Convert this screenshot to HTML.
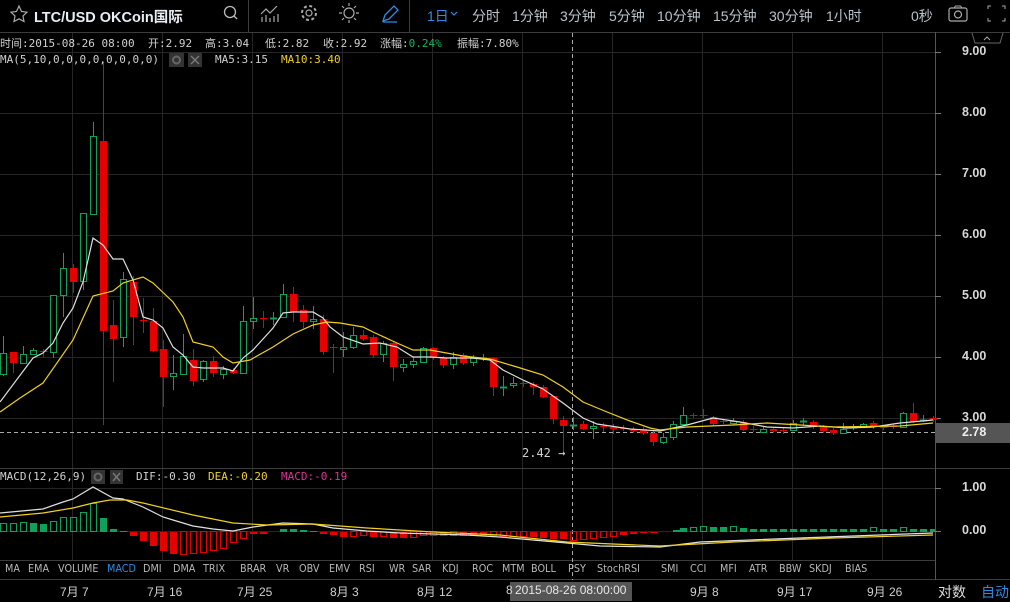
<!DOCTYPE html>
<html><head><meta charset="utf-8"><style>
body{margin:0;background:#000;width:1010px;height:601px;overflow:hidden;position:relative;font-family:"Liberation Sans","Noto Sans CJK SC",sans-serif;color:#c8c8c8}
.a{position:absolute;white-space:nowrap}
.tb{font-size:14px;color:#b8c4cc;top:6px}
.m{font-family:"DejaVu Sans Mono","Liberation Mono","Noto Sans CJK SC",monospace;font-size:11px;color:#d0d0d0}
.ind{font-size:10.5px;color:#b8b8b8;top:563px;font-family:"DejaVu Sans","Liberation Sans",sans-serif;transform:scaleX(0.92);transform-origin:left}
.dt{font-size:12px;color:#d0d0d0;top:583px}
.ax{font-size:12.5px;font-weight:bold;color:#d8d8d8;left:962px}
</style></head><body>
<svg class="a" style="left:0;top:0" width="1010" height="601">
<g stroke="#262626" stroke-width="1">
<path d="M72.5 33V560M162.5 33V560M252.5 33V560M342.5 33V560M432.5 33V560M522.5 33V560M612.5 33V560M702.5 33V560M792.5 33V560M882.5 33V560"/>
<path d="M0 52.5H935M0 113.5H935M0 174.5H935M0 235.5H935M0 296.5H935M0 357.5H935M0 418.5H935M0 488.5H935M0 531.5H935"/>
</g>
<g stroke="#3c3c3c"><path d="M0 32.5H1010M0 468.5H1010M0 560.5H935M0 579.5H1010M248.5 0V32M409.5 0V32"/></g>
<path d="M935.5 32V580" stroke="#555"/>
<path d="M935 52.5h6M935 113.5h6M935 174.5h6M935 235.5h6M935 296.5h6M935 357.5h6M935 418.5h6M935 488.5h6M935 531.5h6" stroke="#777"/>
<path d="M972 33l3 10h25l3-10" stroke="#666" fill="none"/><path d="M984 40l3-3 3 3" stroke="#aaa" fill="none"/>
<rect x="935" y="423" width="75" height="20" fill="#555"/>
<path d="M572.5 33V580" stroke="#aaa" stroke-dasharray="4,3"/>
<path d="M0 432.5H935" stroke="#aaa" stroke-dasharray="4,3"/>
<g stroke="#0fa05a" fill="#000">
<path d="M3.5 336V376M23.5 346V364M33.5 348V355M53.5 295V358M63.5 253V317M83.5 213V290M93.5 122V214M123.5 272V347M173.5 355V390M183.5 334V375M203.5 360V382M223.5 366V379M243.5 306V374M253.5 297V329M273.5 312V325M283.5 284V318M313.5 306V329M343.5 332V357M353.5 327V349M383.5 341V362M403.5 359V372M413.5 357V368M423.5 347V362M453.5 352V369M473.5 355V366M483.5 354V361M503.5 376V396M513.5 377V388M573.5 417V430M593.5 421V439M663.5 433V444M673.5 421V440M683.5 407V426M733.5 418V425M763.5 426V433M793.5 420V431M803.5 418V425M843.5 423V434M853.5 424V430M863.5 423V428M903.5 412V428M923.5 415V422"/>
<rect x="0.5" y="353.5" width="6" height="21"/><rect x="20.5" y="354.5" width="6" height="9"/><rect x="30.5" y="350.5" width="6" height="4"/><rect x="50.5" y="295.5" width="6" height="57"/><rect x="60.5" y="268.5" width="6" height="27"/><rect x="80.5" y="213.5" width="6" height="68"/><rect x="90.5" y="136.5" width="6" height="78"/><rect x="120.5" y="279.5" width="6" height="58"/><rect x="170.5" y="373.5" width="6" height="3"/><rect x="180.5" y="356.5" width="6" height="18"/><rect x="200.5" y="361.5" width="6" height="18"/><rect x="220.5" y="369.5" width="6" height="5"/><rect x="240.5" y="321.5" width="6" height="52"/><rect x="250.5" y="318.5" width="6" height="3"/><rect x="270.5" y="318" width="6" height="1"/><rect x="280.5" y="294.5" width="6" height="23"/><rect x="310.5" y="319.5" width="6" height="2"/><rect x="340.5" y="347.5" width="6" height="2"/><rect x="350.5" y="335.5" width="6" height="12"/><rect x="380.5" y="343.5" width="6" height="11"/><rect x="400.5" y="364.5" width="6" height="3"/><rect x="410.5" y="361.5" width="6" height="3"/><rect x="420.5" y="348.5" width="6" height="14"/><rect x="450.5" y="357.5" width="6" height="7"/><rect x="470.5" y="358.5" width="6" height="4"/><rect x="480.5" y="358" width="6" height="1"/><rect x="500.5" y="387" width="6" height="1"/><rect x="510.5" y="383.5" width="6" height="2"/><rect x="570.5" y="425" width="6" height="1"/><rect x="590.5" y="426.5" width="6" height="2"/><rect x="660.5" y="437.5" width="6" height="5"/><rect x="670.5" y="424.5" width="6" height="13"/><rect x="680.5" y="415.5" width="6" height="9"/><rect x="730.5" y="421.5" width="6" height="2"/><rect x="760.5" y="429.5" width="6" height="3"/><rect x="790.5" y="423.5" width="6" height="7"/><rect x="800.5" y="421" width="6" height="1"/><rect x="840.5" y="429.5" width="6" height="4"/><rect x="850.5" y="427" width="6" height="1"/><rect x="860.5" y="424.5" width="6" height="3"/><rect x="900.5" y="413.5" width="6" height="14"/><rect x="920.5" y="420" width="6" height="1"/>
</g>
<g fill="#e60000" stroke="#e60000">
<path d="M13.5 352V373M43.5 349V357M73.5 264V293M103.5 62V425M113.5 300V382M133.5 276V345M143.5 298V333M153.5 308V352M163.5 340V407M193.5 349V386M213.5 356V377M233.5 368V374M263.5 311V328M293.5 287V322M303.5 305V328M323.5 315V355M333.5 344V373M363.5 330V341M373.5 335V358M393.5 341V381M433.5 347V360M443.5 356V368M463.5 353V365M493.5 357V396M523.5 381V387M533.5 382V395M543.5 385V398M553.5 396V424M563.5 416V455M583.5 421V430M603.5 423V432M613.5 424V434M623.5 425V431M633.5 427V433M643.5 427V435M653.5 431V446M693.5 413V418M703.5 409V418M713.5 416V426M723.5 419V424M743.5 420V431M753.5 426V432M773.5 427V433M783.5 428V434M813.5 420V429M823.5 425V433M833.5 428V435M873.5 421V429M883.5 425V430M893.5 424V429M913.5 403V423M933.5 416V422"/>
<g stroke="none">
<rect x="10" y="352" width="7" height="11"/><rect x="40" y="351" width="7" height="1"/><rect x="70" y="268" width="7" height="14"/><rect x="100" y="141" width="7" height="190"/><rect x="110" y="325" width="7" height="14"/><rect x="130" y="282" width="7" height="35"/><rect x="140" y="320" width="7" height="1"/><rect x="150" y="321" width="7" height="30"/><rect x="160" y="349" width="7" height="28"/><rect x="190" y="360" width="7" height="21"/><rect x="210" y="361" width="7" height="12"/><rect x="230" y="370" width="7" height="3"/><rect x="260" y="318" width="7" height="1"/><rect x="290" y="294" width="7" height="18"/><rect x="300" y="310" width="7" height="12"/><rect x="320" y="319" width="7" height="33"/><rect x="330" y="347" width="7" height="1"/><rect x="360" y="335" width="7" height="4"/><rect x="370" y="337" width="7" height="18"/><rect x="390" y="343" width="7" height="24"/><rect x="430" y="348" width="7" height="10"/><rect x="440" y="358" width="7" height="7"/><rect x="460" y="355" width="7" height="8"/><rect x="490" y="358" width="7" height="29"/><rect x="520" y="383" width="7" height="1"/><rect x="530" y="384" width="7" height="3"/><rect x="540" y="387" width="7" height="10"/><rect x="550" y="396" width="7" height="23"/><rect x="560" y="420" width="7" height="6"/><rect x="580" y="424" width="7" height="5"/><rect x="600" y="426" width="7" height="1"/><rect x="610" y="427" width="7" height="2"/><rect x="620" y="428" width="7" height="1"/><rect x="630" y="429" width="7" height="2"/><rect x="640" y="429" width="7" height="4"/><rect x="650" y="433" width="7" height="9"/><rect x="690" y="415" width="7" height="1"/><rect x="700" y="415" width="7" height="1"/><rect x="710" y="417" width="7" height="7"/><rect x="720" y="421" width="7" height="1"/><rect x="740" y="422" width="7" height="8"/><rect x="750" y="429" width="7" height="1"/><rect x="770" y="429" width="7" height="2"/><rect x="780" y="430" width="7" height="1"/><rect x="810" y="422" width="7" height="5"/><rect x="820" y="427" width="7" height="4"/><rect x="830" y="430" width="7" height="3"/><rect x="870" y="423" width="7" height="4"/><rect x="880" y="427" width="7" height="1"/><rect x="890" y="426" width="7" height="1"/><rect x="910" y="413" width="7" height="9"/><rect x="930" y="418" width="7" height="2"/>
</g></g>
<polyline fill="none" stroke="#e0e0e0" stroke-width="1.2" points="0,402 33,358 43,353 53,343 63,323 73,308 83,282 93,238 103,245 113,259 123,259 133,280 143,317 153,320 163,328 173,347 183,355 193,367 203,368 223,368 233,371 243,358 253,350 263,339 273,328 283,313 293,312 313,312 323,318 330,327 343,337 363,344 380,343 397,347 413,357 430,357 447,358 473,358 490,360 503,370 523,380 543,389 563,403 583,418 597,424 630,429 660,431 687,425 713,418 740,422 767,427 793,428 820,426 847,428 873,427 900,423 933,420"/>
<polyline fill="none" stroke="#f0d020" stroke-width="1.2" points="0,412 20,398 43,383 73,340 93,296 113,291 123,283 143,277 153,283 173,302 183,317 193,342 213,347 223,357 233,363 250,360 273,347 293,334 313,325 327,322 340,323 363,327 373,332 397,343 413,350 430,350 463,356 490,359 517,367 543,375 563,387 583,402 607,412 630,421 650,428 660,430 687,427 733,425 767,423 800,425 833,427 900,426 933,423"/>
<g fill="#0fa05a" stroke="#0fa05a">
<g fill="none"><rect x="0.5" y="523.5" width="6" height="8"/><rect x="10.5" y="523.5" width="6" height="8"/><rect x="20.5" y="522.5" width="6" height="9"/><rect x="50.5" y="521.5" width="6" height="10"/><rect x="60.5" y="517.5" width="6" height="14"/><rect x="70.5" y="517.5" width="6" height="14"/><rect x="80.5" y="512.5" width="6" height="19"/><rect x="90.5" y="503.5" width="6" height="28"/><rect x="690.5" y="527.5" width="6" height="4"/><rect x="700.5" y="526.5" width="6" height="5"/><rect x="730.5" y="526.5" width="6" height="5"/><rect x="870.5" y="527.5" width="6" height="4"/><rect x="900.5" y="527.5" width="6" height="4"/></g>
<g stroke="none"><rect x="30" y="523" width="7" height="9"/><rect x="40" y="524" width="7" height="8"/><rect x="100" y="518" width="7" height="14"/><rect x="110" y="529" width="7" height="3"/><rect x="120" y="531" width="7" height="1"/><rect x="280" y="529" width="7" height="3"/><rect x="290" y="529" width="7" height="3"/><rect x="300" y="530" width="7" height="2"/><rect x="310" y="531" width="7" height="1"/><rect x="673" y="530" width="7" height="2"/><rect x="680" y="528" width="7" height="4"/><rect x="710" y="527" width="7" height="5"/><rect x="720" y="527" width="7" height="5"/><rect x="740" y="528" width="7" height="4"/><rect x="750" y="529" width="7" height="3"/><rect x="760" y="529" width="7" height="3"/><rect x="770" y="529" width="7" height="3"/><rect x="780" y="529" width="7" height="3"/><rect x="790" y="529" width="7" height="3"/><rect x="800" y="529" width="7" height="3"/><rect x="810" y="529" width="7" height="3"/><rect x="820" y="529" width="7" height="3"/><rect x="830" y="529" width="7" height="3"/><rect x="840" y="529" width="7" height="3"/><rect x="850" y="529" width="7" height="3"/><rect x="860" y="529" width="7" height="3"/><rect x="880" y="529" width="7" height="3"/><rect x="890" y="529" width="7" height="3"/><rect x="910" y="529" width="7" height="3"/><rect x="920" y="529" width="7" height="3"/><rect x="930" y="529" width="5" height="3"/></g>
</g>
<g fill="#e60000" stroke="#e60000">
<g fill="none"><rect x="180.5" y="531.5" width="6" height="23"/><rect x="190.5" y="531.5" width="6" height="22"/><rect x="200.5" y="531.5" width="6" height="21"/><rect x="210.5" y="531.5" width="6" height="19"/><rect x="220.5" y="531.5" width="6" height="17"/><rect x="230.5" y="531.5" width="6" height="11"/><rect x="240.5" y="531.5" width="6" height="7"/><rect x="350.5" y="531.5" width="6" height="5"/><rect x="360.5" y="531.5" width="6" height="4"/><rect x="380.5" y="531.5" width="6" height="5"/><rect x="410.5" y="531.5" width="6" height="6"/><rect x="420.5" y="531.5" width="6" height="4"/><rect x="430.5" y="531.5" width="6" height="4"/><rect x="450.5" y="531.5" width="6" height="4"/><rect x="490.5" y="531.5" width="6" height="4"/><rect x="500.5" y="531.5" width="6" height="5"/><rect x="510.5" y="531.5" width="6" height="5"/><rect x="520.5" y="531.5" width="6" height="5"/><rect x="570.5" y="531.5" width="6" height="9"/><rect x="580.5" y="531.5" width="6" height="8"/><rect x="590.5" y="531.5" width="6" height="7"/><rect x="600.5" y="531.5" width="6" height="6"/><rect x="610.5" y="531.5" width="6" height="5"/></g>
<g stroke="none"><rect x="130" y="532" width="7" height="4"/><rect x="140" y="532" width="7" height="9"/><rect x="150" y="532" width="7" height="14"/><rect x="160" y="532" width="7" height="19"/><rect x="170" y="532" width="7" height="22"/><rect x="250" y="532" width="7" height="2"/><rect x="260" y="532" width="7" height="2"/><rect x="320" y="532" width="7" height="2"/><rect x="330" y="532" width="7" height="3"/><rect x="340" y="532" width="7" height="5"/><rect x="370" y="532" width="7" height="5"/><rect x="390" y="532" width="7" height="6"/><rect x="400" y="532" width="7" height="6"/><rect x="440" y="532" width="7" height="4"/><rect x="460" y="532" width="7" height="4"/><rect x="470" y="532" width="7" height="4"/><rect x="480" y="532" width="7" height="4"/><rect x="530" y="532" width="7" height="5"/><rect x="540" y="532" width="7" height="6"/><rect x="550" y="532" width="7" height="7"/><rect x="560" y="532" width="7" height="7"/><rect x="620" y="532" width="7" height="3"/><rect x="630" y="532" width="7" height="2"/><rect x="640" y="532" width="7" height="1"/><rect x="650" y="532" width="7" height="1"/></g>
</g>
<polyline fill="none" stroke="#e0e0e0" stroke-width="1.2" points="0,513 43,509 63,502 73,499 93,487 113,498 123,499 143,507 163,517 173,520 193,526 213,529 233,531 253,527 283,523 313,524 333,528 367,531 400,533 433,534 467,535 500,537 533,540 567,543 600,546 660,547 700,542 800,538 933,533"/>
<polyline fill="none" stroke="#f0d020" stroke-width="1.2" points="0,517 43,513 73,508 93,503 110,500 127,500 143,503 193,515 233,523 267,525 313,524 367,528 433,532 500,535 567,542 660,546 733,542 833,538 933,535"/>
<path d="M19 6l2.5 5.5 5.5.7-4 3.8 1 5.5L19 18.8 14 21.5l1-5.5-4-3.8 5.5-.7z" fill="none" stroke="#aaa" stroke-width="1.2"/>
<circle cx="230" cy="12" r="5.5" fill="none" stroke="#bbb" stroke-width="1.3"/><path d="M234 16l3 3" stroke="#bbb" stroke-width="1.3"/>
<path d="M261 14l5-5 4 4 7-7M262 22v-5M266 22v-7M270 22v-4M274 22v-6M278 22v-8" fill="none" stroke="#aaa" stroke-width="1.2"/>
<circle cx="309" cy="13" r="3" fill="none" stroke="#aaa" stroke-width="1.2"/><circle cx="309" cy="13" r="7" fill="none" stroke="#aaa" stroke-width="2" stroke-dasharray="3,2.5"/>
<circle cx="349" cy="13" r="5" fill="none" stroke="#aaa" stroke-width="1.2"/><path d="M349 3v3M349 20v3M339 13h3M356 13h3M342 6l2 2M354 18l2 2M356 6l-2 2M342 20l2-2" stroke="#aaa" stroke-width="1.2"/>
<path d="M383 21l2-6 9-9 4 4-9 9zM383 22h14" fill="none" stroke="#2e8ce6" stroke-width="1.3"/>
<path d="M451 12l3 3 3-3" fill="none" stroke="#2e8ce6" stroke-width="1.2"/>
<rect x="949" y="8" width="18" height="13" rx="2" fill="none" stroke="#aaa" stroke-width="1.2"/><circle cx="958" cy="14.5" r="3.5" fill="none" stroke="#aaa" stroke-width="1.2"/><path d="M954 8l1.5-2h5l1.5 2" fill="none" stroke="#aaa"/>
<path d="M988 9V6h3M1005 9V6h-3M988 18v3h3M1005 18v3h-3" fill="none" stroke="#aaa"/>
<rect x="169" y="53" width="15" height="14" fill="#333"/><rect x="188" y="53" width="14" height="14" fill="#333"/>
<circle cx="176.5" cy="60" r="3.5" fill="none" stroke="#666" stroke-width="2"/><path d="M191 56l8 8M199 56l-8 8" stroke="#777" stroke-width="1.5"/>
<rect x="91" y="470" width="14" height="14" fill="#333"/><rect x="110" y="470" width="13" height="14" fill="#333"/>
<circle cx="98" cy="477" r="3.5" fill="none" stroke="#666" stroke-width="2"/><path d="M113 473l7 8M120 473l-7 8" stroke="#777" stroke-width="1.5"/>
<rect x="510" y="582" width="122" height="19" fill="#555"/>
</svg>
<div class="a" style="left:34px;top:6px;font-size:14.5px;font-weight:bold;color:#e8eef4">LTC/USD OKCoin国际</div>
<div class="a tb" style="left:427px;color:#2e8ce6">1日</div>
<div class="a tb" style="left:472px">分时</div>
<div class="a tb" style="left:512px">1分钟</div>
<div class="a tb" style="left:560px">3分钟</div>
<div class="a tb" style="left:609px">5分钟</div>
<div class="a tb" style="left:657px">10分钟</div>
<div class="a tb" style="left:713px">15分钟</div>
<div class="a tb" style="left:769px">30分钟</div>
<div class="a tb" style="left:826px">1小时</div>
<div class="a tb" style="left:911px">0秒</div>
<div class="a m" style="left:0;top:35px">时间:2015-08-26 08:00</div>
<div class="a m" style="left:148px;top:35px">开:2.92</div>
<div class="a m" style="left:205px;top:35px">高:3.04</div>
<div class="a m" style="left:265px;top:35px">低:2.82</div>
<div class="a m" style="left:323px;top:35px">收:2.92</div>
<div class="a m" style="left:380px;top:35px">涨幅:<span style="color:#14b460">0.24%</span></div>
<div class="a m" style="left:457px;top:35px">振幅:7.80%</div>
<div class="a m" style="left:0;top:53px">MA(5,10,0,0,0,0,0,0,0,0)</div>
<div class="a m" style="left:215px;top:53px">MA5:3.15</div>
<div class="a m" style="left:281px;top:53px;color:#f0d020">MA10:3.40</div>
<div class="a m" style="left:0;top:470px">MACD(12,26,9)</div>
<div class="a m" style="left:136px;top:470px">DIF:-0.30</div>
<div class="a m" style="left:208px;top:470px;color:#f0d020">DEA:-0.20</div>
<div class="a m" style="left:281px;top:470px;color:#e0309a">MACD:-0.19</div>
<div class="a m" style="left:522px;top:446px;font-size:12px">2.42 →</div>
<div class="a ax" style="top:44px">9.00</div>
<div class="a ax" style="top:105px">8.00</div>
<div class="a ax" style="top:166px">7.00</div>
<div class="a ax" style="top:227px">6.00</div>
<div class="a ax" style="top:288px">5.00</div>
<div class="a ax" style="top:349px">4.00</div>
<div class="a ax" style="top:410px">3.00</div>
<div class="a ax" style="top:425px;color:#eee">2.78</div>
<div class="a ax" style="top:480px">1.00</div>
<div class="a ax" style="top:523px">0.00</div>
<div class="a ind" style="left:5px">MA</div><div class="a ind" style="left:28px">EMA</div><div class="a ind" style="left:58px">VOLUME</div><div class="a ind" style="left:107px;color:#2e8ce6">MACD</div><div class="a ind" style="left:143px">DMI</div><div class="a ind" style="left:173px">DMA</div><div class="a ind" style="left:203px">TRIX</div><div class="a ind" style="left:240px">BRAR</div><div class="a ind" style="left:276px">VR</div><div class="a ind" style="left:299px">OBV</div><div class="a ind" style="left:329px">EMV</div><div class="a ind" style="left:359px">RSI</div><div class="a ind" style="left:389px">WR</div><div class="a ind" style="left:412px">SAR</div><div class="a ind" style="left:442px">KDJ</div><div class="a ind" style="left:472px">ROC</div><div class="a ind" style="left:502px">MTM</div><div class="a ind" style="left:531px">BOLL</div><div class="a ind" style="left:568px">PSY</div><div class="a ind" style="left:597px">StochRSI</div><div class="a ind" style="left:661px">SMI</div><div class="a ind" style="left:690px">CCI</div><div class="a ind" style="left:720px">MFI</div><div class="a ind" style="left:749px">ATR</div><div class="a ind" style="left:779px">BBW</div><div class="a ind" style="left:809px">SKDJ</div><div class="a ind" style="left:845px">BIAS</div>
<div class="a dt" style="left:60px">7月 7</div><div class="a dt" style="left:147px">7月 16</div><div class="a dt" style="left:237px">7月 25</div><div class="a dt" style="left:330px">8月 3</div><div class="a dt" style="left:417px">8月 12</div><div class="a dt" style="left:506px">8</div>
<div class="a dt" style="left:515px;color:#e8e8e8">2015-08-26 08:00:00</div>
<div class="a dt" style="left:690px">9月 8</div><div class="a dt" style="left:777px">9月 17</div><div class="a dt" style="left:867px">9月 26</div>
<div class="a" style="left:938px;top:582px;font-size:14px;color:#ddd">对数</div>
<div class="a" style="left:981px;top:582px;font-size:14px;color:#2e8ce6">自动</div>
</body></html>
